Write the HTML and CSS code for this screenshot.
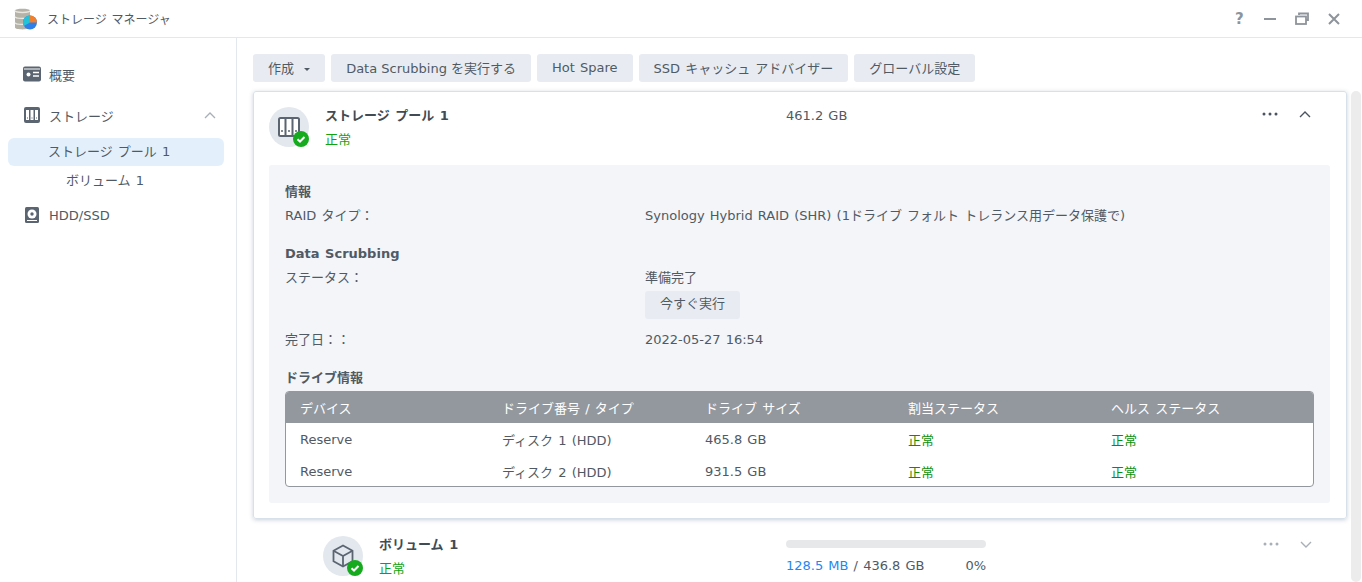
FILE: index.html
```html
<!DOCTYPE html>
<html lang="ja">
<head>
  <meta charset="UTF-8">
  <title>ストレージ マネージャ</title>
  <link rel="stylesheet" href="styles.css">
</head>
<body>

  <!-- title bar -->
  <header class="titlebar">
    <svg class="app-logo" width="24" height="24" viewBox="0 0 24 24">
      <path d="M1 3.500C1 1 16 1 16 3.500V20.500C16 23 1 23 1 20.500Z" fill="#b5b2a8"/>
      <path d="M1 3.500C1 6 16 6 16 3.500" fill="none" stroke="#e8e6df" stroke-width="1.500"/>
      <path d="M1 9.500C1 12 16 12 16 9.500M1 15.500C1 18 16 18 16 15.500" fill="none" stroke="#ecebe5" stroke-width="1.300"/>
      <circle cx="16" cy="15.500" r="7" fill="#2f7fe8"/>
      <path d="M16 15.500V8.500A7 7 0 0 1 23 15.500Z" fill="#f07f2e"/>
      <path d="M16 15.500L9.900 18.900A7 7 0 0 1 16 8.500Z" fill="#22c3d6"/>
    </svg>
    <div class="app-title">ストレージ マネージャ</div>
    <div class="win-btns">
      <span class="win-help">?</span>
      <svg width="14" height="14" viewBox="0 0 14 14"><path d="M1 7h12" stroke="#8e949b" stroke-width="2"/></svg>
      <svg width="14" height="14" viewBox="0 0 14 14" fill="none" stroke="#8e949b" stroke-width="1.800"><path d="M4 3V1.500h9V8h-2"/><rect x="1" y="4.500" width="10" height="7.500"/></svg>
      <svg width="14" height="14" viewBox="0 0 14 14"><path d="M2 2l10 10M12 2L2 12" stroke="#8e949b" stroke-width="2"/></svg>
    </div>
  </header>

  <div class="app-body">

    <!-- sidebar -->
    <nav class="sidebar">
      <div class="nav-item">
        <svg width="18" height="16" viewBox="0 0 18 16"><rect width="18" height="15" y=".5" rx="2" fill="#5b6572"/><circle cx="5.500" cy="8.500" r="2" fill="#fff"/><path d="M10 6.500h6M10 10h6" stroke="#fff" stroke-width="1.300"/><path d="M1 3h16" stroke="#fff" stroke-width="1"/></svg>
        <span>概要</span>
      </div>
      <div class="nav-item nav-group">
        <svg width="16" height="16" viewBox="0 0 16 16"><rect width="16" height="16" rx="2" fill="#5b6572"/><path d="M2 3h3v10H2zM6.500 3h3v10h-3zM11 3h3v10h-3z" fill="#fff"/><path d="M3 11h1M7.500 11h1M12 11h1" stroke="#5b6572"/></svg>
        <span>ストレージ</span>
        <svg class="nav-caret" width="12" height="7" viewBox="0 0 12 7" fill="none"><path d="M1 6l5-5 5 5" stroke="#a9afb6" stroke-width="1.300"/></svg>
      </div>
      <div class="nav-sub active">ストレージ プール 1</div>
      <div class="nav-sub nav-sub2">ボリューム 1</div>
      <div class="nav-item nav-hdd">
        <svg width="14" height="16" viewBox="0 0 14 16"><rect width="14" height="16" rx="1.500" fill="#5b6572"/><circle cx="7" cy="7" r="4.500" fill="#fff"/><circle cx="7" cy="7" r="1.700" fill="#5b6572"/><path d="M2 13.500h10" stroke="#fff"/></svg>
        <span>HDD/SSD</span>
      </div>
    </nav>

    <main class="content">
      <div class="scroll-area">
        <div class="toolbar">
          <button class="btn">作成 <i class="btn-caret"></i></button>
          <button class="btn btn-data">Data Scrubbing を実行する</button>
          <button class="btn">Hot Spare</button>
          <button class="btn">SSD キャッシュ アドバイザー</button>
          <button class="btn">グローバル設定</button>
        </div>

        <!-- pool card -->
        <section class="card">
          <div class="row-head">
            <div class="round-icon">
              <svg width="22" height="20" viewBox="0 0 22 20"><rect x="1" y="1" width="20" height="18" rx="1.500" fill="#fff" stroke="#5b6572" stroke-width="2"/><path d="M7.500 1v18M14.500 1v18" stroke="#5b6572" stroke-width="2"/><path d="M3 14h2M10 14h2M17 14h2" stroke="#5b6572" stroke-width="1.500"/></svg>
              <svg class="ok-badge" width="16" height="16" viewBox="0 0 16 16"><circle cx="8" cy="8" r="8" fill="#16ab1e"/><path d="M4.500 8.200l2.500 2.300 4.500-4.500" fill="none" stroke="#fff" stroke-width="2"/></svg>
            </div>
            <div class="head-name">
              <div class="name-text">ストレージ プール 1</div>
              <div class="ok-text">正常</div>
            </div>
            <div class="head-size">461.2 GB</div>
            <div class="head-actions">
              <svg width="16" height="4" viewBox="0 0 16 4" fill="#4a5460"><circle cx="2" cy="2" r="1.500"/><circle cx="8" cy="2" r="1.500"/><circle cx="14" cy="2" r="1.500"/></svg>
              <svg width="12" height="7" viewBox="0 0 12 7" fill="none"><path d="M1 6l5-5 5 5" stroke="#4a5460" stroke-width="1.400"/></svg>
            </div>
          </div>

          <div class="detail">
            <h4 class="detail-title">情報</h4>
            <div class="kv"><div class="kv-key">RAID タイプ：</div><div>Synology Hybrid RAID (SHR) (1ドライブ フォルト トレランス用データ保護で)</div></div>

            <h4 class="detail-title title-scrub">Data Scrubbing</h4>
            <div class="kv"><div class="kv-key">ステータス：</div>
              <div>準備完了<br><button class="btn btn-run">今すぐ実行</button></div>
            </div>
            <div class="kv kv-date"><div class="kv-key">完了日：：</div><div>2022-05-27 16:54</div></div>

            <h4 class="detail-title title-drive">ドライブ情報</h4>
            <div class="drive-table">
              <div class="drive-row drive-head">
                <div>デバイス</div><div>ドライブ番号 / タイプ</div><div>ドライブ サイズ</div><div>割当ステータス</div><div>ヘルス ステータス</div>
              </div>
              <div class="drive-row">
                <div>Reserve</div><div>ディスク 1 (HDD)</div><div>465.8 GB</div><div class="cell-ok">正常</div><div class="cell-ok">正常</div>
              </div>
              <div class="drive-row">
                <div>Reserve</div><div>ディスク 2 (HDD)</div><div>931.5 GB</div><div class="cell-ok">正常</div><div class="cell-ok">正常</div>
              </div>
            </div>
          </div>
        </section>

        <!-- volume row -->
        <section class="volume">
          <div class="round-icon">
            <svg width="22" height="24" viewBox="0 0 22 24" fill="none" stroke="#5b6572" stroke-width="1.800"><path d="M11 1.500l9.500 5.300v10.400L11 22.500 1.500 17.200V6.800z"/><path d="M1.500 6.800L11 12l9.500-5.200M11 12v10.500"/></svg>
            <svg class="ok-badge" width="16" height="16" viewBox="0 0 16 16"><circle cx="8" cy="8" r="8" fill="#16ab1e"/><path d="M4.500 8.200l2.500 2.300 4.500-4.500" fill="none" stroke="#fff" stroke-width="2"/></svg>
          </div>
          <div class="head-name vol-name">
            <div class="name-text">ボリューム 1</div>
            <div class="ok-text">正常</div>
          </div>
          <div class="vol-usage">
            <div class="bar"></div>
            <div class="vol-nums"><span><span class="used">128.5 MB</span> / 436.8 GB</span><span>0%</span></div>
          </div>
          <div class="head-actions vol-actions">
            <svg width="16" height="4" viewBox="0 0 16 4" fill="#a9afb6"><circle cx="2" cy="2" r="1.500"/><circle cx="8" cy="2" r="1.500"/><circle cx="14" cy="2" r="1.500"/></svg>
            <svg width="12" height="7" viewBox="0 0 12 7" fill="none"><path d="M1 1l5 5 5-5" stroke="#a9afb6" stroke-width="1.400"/></svg>
          </div>
        </section>
      </div>
      <div class="scrollbar"></div>
    </main>
  </div>

</body>
</html>
```

FILE: styles.css
```css
* {
  box-sizing: border-box;
}

html, body {
  height: 100%;
}

body {
  margin: 0;
  overflow: hidden;
  background: #fff;
  font-family: 'DejaVu Sans', 'Noto Sans CJK JP', sans-serif;
  font-size: 13px;
  word-spacing: 1px;
  color: #505a64;
  display: flex;
  flex-direction: column;
}

.titlebar {
  height: 38px;
  flex: none;
  display: flex;
  align-items: center;
  padding: 0 21px 0 14px;
  border-bottom: 1px solid #e3e8ef;
}

.app-logo {
  margin-right: 9px;
}

.app-title {
  font-size: 12px;
  flex: 1;
}

.win-btns {
  display: flex;
  align-items: center;
  gap: 18px;
}

.win-help {
  font-size: 15px;
  font-weight: 600;
  color: #8e949b;
  width: 10px;
}

.app-body {
  flex: 1;
  display: flex;
  min-height: 0;
}

.sidebar {
  width: 237px;
  flex: none;
  border-right: 1px solid #e3e8ef;
  padding: 20px 12px 0 8px;
}

.nav-item {
  height: 32px;
  display: flex;
  align-items: center;
  padding-left: 15px;
  gap: 8px;
}

.nav-item svg {
  flex: none;
}

.nav-group {
  margin-top: 9px;
  padding-left: 16px;
  gap: 9px;
}

.nav-caret {
  margin-left: auto;
  margin-right: 8px;
}

.nav-sub {
  height: 28px;
  line-height: 28px;
  padding-left: 40px;
  border-radius: 6px;
  margin-top: 7px;
}

.nav-sub.active {
  background: #e3f0fc;
}

.nav-sub2 {
  margin-top: 1px;
  padding-left: 58px;
}

.nav-hdd {
  margin-top: 4px;
  padding-left: 17px;
  gap: 10px;
}

.content {
  flex: 1;
  display: flex;
  min-width: 0;
  overflow: hidden;
}

.scroll-area {
  width: 1110px;
  flex: none;
  padding: 16px 0 0 16px;
}

.toolbar {
  display: flex;
  gap: 6px;
  margin-bottom: 9px;
}

.btn {
  height: 28px;
  padding: 0 15px 2px;
  border: 0;
  border-radius: 3px;
  background: #e8ecf2;
  color: #505a64;
  font: inherit;
  word-spacing: 1px;
}

.btn-data {
  word-spacing: 0;
}

.btn-caret {
  display: inline-block;
  margin-left: 5px;
  vertical-align: middle;
  border-top: 3px solid #505a64;
  border-left: 3px solid transparent;
  border-right: 3px solid transparent;
}

.card {
  width: 1094px;
  height: 428px;
  padding: 0 16px 0 15px;
  border: 1px solid #d8e1ea;
  border-radius: 3px;
  box-shadow: 0 1px 4px rgba(80, 100, 130, 0.3);
}

.row-head {
  display: flex;
  height: 73px;
  padding-top: 15px;
}

.round-icon {
  position: relative;
  width: 40px;
  height: 40px;
  flex: none;
  border-radius: 50%;
  background: #e3e8ef;
  display: flex;
  align-items: center;
  justify-content: center;
}

.ok-badge {
  position: absolute;
  right: 0;
  bottom: 0;
}

.head-name {
  width: 461px;
  margin-left: 16px;
  margin-top: -1px;
}

.name-text {
  font-weight: 700;
  color: #414b55;
  line-height: 20px;
  margin-bottom: 4px;
}

.ok-text {
  color: #0fa30f;
  line-height: 20px;
}

.cell-ok {
  color: #0a8f0a;
}

.head-size {
  line-height: 18px;
}

.head-actions {
  margin-left: auto;
  display: flex;
  align-items: center;
  gap: 21px;
  height: 16px;
  padding-right: 19px;
  margin-top: -1px;
}

.detail {
  height: 338px;
  padding: 17px 16px 0;
  background: #f3f5f9;
  border-radius: 3px;
}

.detail-title {
  margin: 0;
  font-size: 13px;
  font-weight: 700;
  line-height: 20px;
  color: #505a64;
}

.title-scrub {
  margin-top: 18px;
}

.title-drive {
  margin-top: 18px;
}

.kv {
  display: flex;
  line-height: 20px;
  margin-top: 4px;
}

.kv-key {
  width: 360px;
  flex: none;
}

.kv-date {
  margin-top: 11px;
}

.btn-run {
  display: block;
  margin-top: 3px;
}

.drive-table {
  margin-top: 3px;
  height: 96px;
  border: 1px solid #93989e;
  border-radius: 4px;
  background: #fff;
  overflow: hidden;
}

.drive-row {
  display: grid;
  grid-template-columns: 202px 203px 203px 203px 1fr;
  height: 32px;
  align-items: center;
  padding-left: 14px;
}

.drive-head {
  background: #93989e;
  color: #fff;
  height: 31px;
}

.volume {
  display: flex;
  width: 1094px;
  padding: 17px 16px 0 70px;
}

.vol-name {
  width: 407px;
  margin-left: 16px;
  margin-top: -1px;
}

.vol-usage {
  width: 200px;
  margin-top: 4px;
}

.bar {
  height: 8px;
  border-radius: 4px;
  background: #e7e8ea;
  margin-bottom: 8px;
}

.vol-nums {
  display: flex;
  justify-content: space-between;
  line-height: 20px;
}

.used {
  color: #1e88f0;
}

.vol-actions {
  margin-top: 0;
}

.scrollbar {
  width: 10px;
  margin: 53px 0 0 4px;
  border-radius: 5px;
  background: #ececec;
}
```
